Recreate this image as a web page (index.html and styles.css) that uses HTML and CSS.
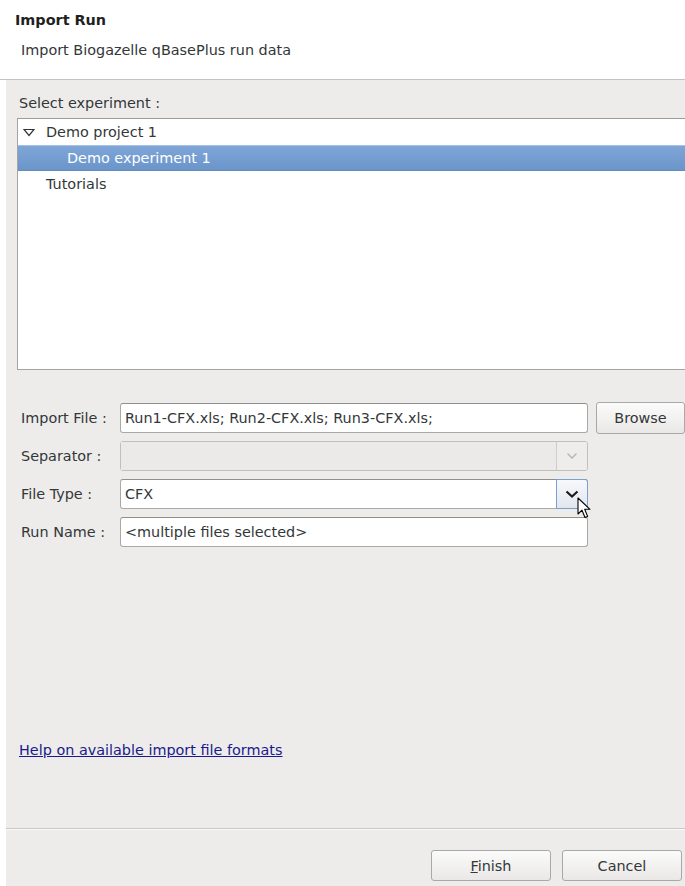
FILE: index.html
```html
<!DOCTYPE html>
<html>
<head>
<meta charset="utf-8">
<link rel="stylesheet" href="styles.css">
</head>
<body>
<div class="dialog">
  <header class="banner">
    <div class="banner-title">Import Run</div>
    <div class="banner-sub">Import Biogazelle qBasePlus run data</div>
  </header>
  <main class="content">
    <div class="pane">
      <div class="section-label">Select experiment :</div>
      <div class="tree">
        <div class="tree-row">
          <span class="twisty"><svg width="12" height="9" viewBox="0 0 12 9"><path d="M1 1.5 H11 L6 7.5 Z" fill="none" stroke="#2e3436" stroke-width="1.2" stroke-linejoin="miter"/></svg></span>
          <span>Demo project 1</span>
        </div>
        <div class="tree-row selected child"><span>Demo experiment 1</span></div>
        <div class="tree-row"><span class="twisty"></span><span>Tutorials</span></div>
      </div>
      <div class="form">
        <div class="form-row">
          <label class="form-label">Import File :</label>
          <div class="entry">Run1-CFX.xls; Run2-CFX.xls; Run3-CFX.xls;</div>
          <button class="btn browse">Browse</button>
        </div>
        <div class="form-row">
          <label class="form-label">Separator :</label>
          <div class="combo disabled">
            <div class="combo-text"></div>
            <div class="combo-btn"><svg width="12" height="8" viewBox="0 0 12 8"><path d="M1.5 1.5 L6 6 L10.5 1.5" fill="none" stroke="#b4b4b4" stroke-width="1.3"/></svg></div>
          </div>
        </div>
        <div class="form-row">
          <label class="form-label">File Type :</label>
          <div class="combo">
            <div class="combo-text">CFX</div>
            <div class="combo-btn hover"><svg width="14" height="9" viewBox="0 0 14 9"><path d="M1.5 1.5 L7 6.5 L12.5 1.5" fill="none" stroke="#1a1a1a" stroke-width="2.2"/></svg></div>
            <svg class="pointer" width="14" height="22" viewBox="0 0 14 22"><path d="M1 1 V17 L5 13.2 L8 20.5 L10.6 19.4 L7.7 12.3 L13 12.3 Z" fill="#ffffff" stroke="#000000" stroke-width="1.1" stroke-linejoin="round"/></svg>
          </div>
        </div>
        <div class="form-row">
          <label class="form-label">Run Name :</label>
          <div class="entry">&lt;multiple files selected&gt;</div>
        </div>
      </div>
      <div class="spacer"></div>
      <a class="help-link" href="#">Help on available import file formats</a>
    </div>
    <footer class="actions">
      <button class="btn action"><u>F</u>inish</button>
      <button class="btn action">Cancel</button>
    </footer>
  </main>
</div>
</body>
</html>
```

FILE: styles.css
```css
* { box-sizing: border-box; }

html, body {
  margin: 0;
  padding: 0;
  background: #ffffff;
}

body {
  width: 685px;
  height: 886px;
  overflow: hidden;
  font-family: "DejaVu Sans", sans-serif;
  font-size: 14.4px;
  color: #333738;
}

.dialog {
  display: flex;
  flex-direction: column;
  height: 100%;
}

/* white title banner */
.banner {
  height: 80px;
  background: #ffffff;
  border-bottom: 1px solid #c3c3c1;
  padding: 12px 0 0 15px;
}

.banner-title {
  font-weight: bold;
  line-height: 17px;
  color: #1f1f1f;
}

.banner-sub {
  margin: 13px 0 0 6px;
  line-height: 17px;
}

.content {
  flex: 1;
  margin-left: 6px;
  background: #edeceb;
  display: flex;
  flex-direction: column;
}

.pane {
  flex: 1;
  display: flex;
  flex-direction: column;
  padding: 15px 0 0 11px;
  border-bottom: 1px solid #c9c8c6;
  box-shadow: 0 1px 0 #f8f8f8;
}

.section-label {
  margin-left: 2px;
  line-height: 17px;
  height: 23px;
}

/* experiment tree */
.tree {
  height: 252px;
  background: #ffffff;
  border: 1px solid #a4a4a2;
  border-top-color: #9c9c9a;
  border-right: none;
}

.tree-row {
  height: 26px;
  display: flex;
  align-items: center;
  padding-left: 5px;
}

.twisty {
  width: 23px;
  display: flex;
  align-items: center;
  padding-top: 1px;
}

.tree-row.child { padding-left: 49px; }

.tree-row.selected {
  background: linear-gradient(#7ea6d8, #6b94c9);
  border-top: 1px solid #a5c2e6;
  border-bottom: 1px solid #628bbf;
  color: #ffffff;
}

/* input rows */
.form {
  margin-top: 33px;
  display: flex;
  flex-direction: column;
  gap: 8px;
}

.form-row {
  display: flex;
  align-items: center;
  height: 30px;
}

.form-label {
  width: 103px;
  padding-left: 4px;
}

.entry {
  width: 468px;
  height: 30px;
  background: #ffffff;
  border: 1px solid #a9a9a7;
  border-top-color: #8f8f8d;
  border-radius: 3px;
  padding: 0 4px;
  display: flex;
  align-items: center;
  white-space: nowrap;
  overflow: hidden;
}

.btn {
  font: inherit;
  color: #333738;
  background: linear-gradient(#fbfbfb, #e9e8e6);
  border: 1px solid #a8a8a6;
  border-radius: 3px;
  padding: 0;
}

.browse {
  width: 89px;
  height: 32px;
  margin-left: 8px;
}

.combo {
  position: relative;
  width: 468px;
  height: 30px;
  display: flex;
  background: #ffffff;
  border: 1px solid #a9a9a7;
  border-top-color: #8f8f8d;
  border-radius: 3px;
}

.combo-text {
  flex: 1;
  display: flex;
  align-items: center;
  padding-left: 4px;
}

.combo-btn {
  width: 31px;
  display: flex;
  align-items: center;
  justify-content: center;
  border-left: 1px solid #b7b7b5;
  background: linear-gradient(#fafafa, #ecebea);
  border-radius: 0 2px 2px 0;
}

.combo.disabled {
  background: #e9e8e7;
  border-color: #c0bfbd;
}

.combo.disabled .combo-text { background: #ebeae9; }

.combo.disabled .combo-btn {
  background: #eeedec;
  border-left-color: #cfcecc;
}

.combo-btn.hover {
  margin: -1px -1px -1px 0;
  width: 32px;
  border: 1px solid #7b9fcf;
  border-radius: 0 3px 3px 0;
  background: linear-gradient(#f6f8fb, #e2e7ee);
}

/* mouse pointer resting on the open button */
.pointer {
  position: absolute;
  left: 456px;
  top: 17px;
}

.spacer { flex: 1; }

.help-link {
  margin: 0 0 69px 2px;
  color: #1a1a8c;
  text-decoration: underline;
  line-height: 17px;
}

/* bottom buttons */
.actions {
  height: 57px;
  display: flex;
  justify-content: flex-end;
  align-items: flex-start;
  gap: 11px;
  padding: 21px 3px 0 0;
}

.action {
  width: 120px;
  height: 31px;
}
```
